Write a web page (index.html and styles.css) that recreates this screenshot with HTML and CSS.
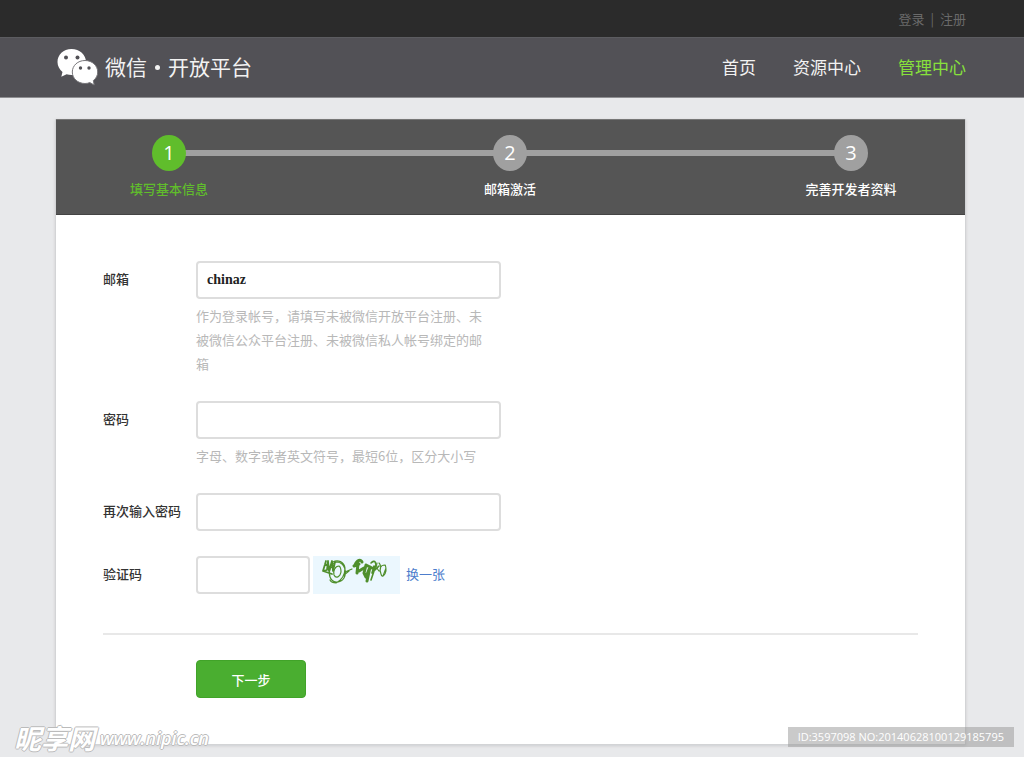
FILE: index.html
```html
<!DOCTYPE html>
<html lang="zh-CN">
<head>
<meta charset="utf-8">
<title>微信·开放平台</title>
<meta name="viewport" content="width=device-width, initial-scale=1">
<link rel="stylesheet" href="styles.css">
</head>
<body>
<div class="topbar">
  <div class="topbar-links"><a href="#">登录</a><span class="divider">|</span><a href="#">注册</a></div>
</div>
<header class="header">
  <a class="brand" href="#">
    <svg class="brand-icon" viewBox="0 0 42 38" aria-hidden="true">
      <path fill="#fff" d="M15.500 1C7.300 1 1.500 6.800 1.500 14c0 4.100 2 7.600 5 9.900L5.300 28.800l5.300-2.600c1.600.5 3.200.8 4.900.8C23.700 27 30 21.200 30 14S23.700 1 15.500 1z"/>
      <circle cx="10" cy="9.500" r="2" fill="#525156"/>
      <circle cx="21.500" cy="9.500" r="2" fill="#525156"/>
      <path fill="#fff" stroke="#77767a" stroke-width="1" d="M29 12.500c-7.200 0-12.700 5.100-12.700 11.500S21.800 35.500 29 35.500c1.700 0 3.300-.3 4.800-.9l4.400 2.400-.9-4.400c2.800-2.100 4.400-5.100 4.400-8.600 0-6.400-5.500-11.500-12.700-11.500z"/>
      <circle cx="24.500" cy="20" r="1.700" fill="#525156"/>
      <circle cx="33" cy="20" r="1.700" fill="#525156"/>
    </svg>
    <span>微信</span><span class="brand-dot"></span><span>开放平台</span>
  </a>
  <nav class="nav">
    <a href="#">首页</a>
    <a href="#">资源中心</a>
    <a class="active" href="#">管理中心</a>
  </nav>
</header>

<main class="card">
  <ol class="steps">
    <li class="step current"><span class="step-num">1</span><span>填写基本信息</span></li>
    <li class="step"><span class="step-num">2</span><span>邮箱激活</span></li>
    <li class="step"><span class="step-num">3</span><span>完善开发者资料</span></li>
  </ol>
  <form class="form">
    <div class="row">
      <label for="email">邮箱</label>
      <div class="field">
        <input class="email" id="email" type="text" value="chinaz">
        <p class="hint">作为登录帐号，请填写未被微信开放平台注册、未被微信公众平台注册、未被微信私人帐号绑定的邮箱</p>
      </div>
    </div>
    <div class="row">
      <label for="password">密码</label>
      <div class="field">
        <input id="password" type="password">
        <p class="hint">字母、数字或者英文符号，最短6位，区分大小写</p>
      </div>
    </div>
    <div class="row">
      <label for="confirm">再次输入密码</label>
      <div class="field"><input id="confirm" type="password"></div>
    </div>
    <div class="row">
      <label for="code">验证码</label>
      <div class="captcha">
        <input id="code" type="text">
        <svg class="captcha-image" viewBox="0 0 87 38" role="img" aria-label="验证码图片">
          <rect width="87" height="38" fill="#ebf7fe"/>
          <g fill="none" stroke="#4f8f2c" stroke-linecap="round" stroke-linejoin="round">
            <path stroke-width="1.800" d="M13 5l-3 10 4-1 1-9 1 10 3-10 1 10 2-9M10 15l9 3M12 8l8 4"/>
            <path stroke-width="1.200" d="M24 6c-6 1-9 9-7 15 2 6 10 7 14 1 3-6 1-15-7-16zM26 10c-4 0-6 5-5 9 2 4 6 2 7-3 0-3 0-5-2-6zM20 6c5-3 11 0 12 6 0 6-3 12-9 15-3 0-5-1-6-3M32 16l7-3M31 19l5-4"/>
            <path stroke-width="3" d="M42 9c2-5 6-6 7-3M41 10l5-2M45 8l-1 9M46 15l5-3"/>
            <path stroke-width="3" d="M53 9l-2 8 2 4 4-10-3 14M53 9l6 3"/>
            <path stroke-width="1.600" d="M58 7c4-4 6 0 4 5l-4 12M61 10l-2 7M62 14l4-4"/>
            <path stroke-width="1.100" d="M64 7c-1 3 0 6 2 8M66 7c2 2 2 5 1 8M72 9c-5 0-6 4-4 9 1 4 4 2 5-3 0-3 0-5-1-6zM70 20l3-8"/>
          </g>
        </svg>
        <a class="refresh" href="#">换一张</a>
      </div>
    </div>
    <div class="actions"><button class="submit" type="submit">下一步</button></div>
  </form>
</main>

<div class="watermark">
  <span class="watermark-name">昵享网</span><span class="watermark-url">www.nipic.cn</span>
</div>
<div class="image-id">ID:3597098 NO:20140628100129185795</div>
</body>
</html>
```
FILE: styles.css
```css
* {
  box-sizing: border-box;
}

body {
  margin: 0;
  min-height: 100vh;
  position: relative;
  padding-bottom: 12px;
  background: #e8e9eb;
  color: #333;
  font: 13px/24px "Noto Sans CJK SC", sans-serif;
}

a {
  color: inherit;
  text-decoration: none;
}

.topbar {
  height: 37px;
  padding: 0 58px 0 55px;
  background: #2b2b2b;
  color: #6a6a6a;
}

.topbar-links {
  display: flex;
  justify-content: flex-end;
  gap: 6px;
  line-height: 37px;
}

.header {
  display: flex;
  justify-content: space-between;
  align-items: center;
  height: 61px;
  padding: 0 58px 2px 56px;
  border-top: 1px solid #5c5c60;
  border-bottom: 1px solid #8e8e91;
  background: #525156;
  color: #f2f2f2;
}

.brand {
  display: flex;
  align-items: center;
  font-size: 21px;
  line-height: 34px;
  padding-bottom: 2px;
  white-space: nowrap;
}

.brand-icon {
  width: 42px;
  height: 38px;
  margin: 2px 7px 0 0;
}

.brand-dot {
  width: 5px;
  height: 5px;
  margin: 3px 8px 0;
  border-radius: 50%;
  background: #f2f2f2;
}

.nav {
  display: flex;
  gap: 37px;
  font-size: 17px;
}

.nav .active {
  color: #87e03c;
}

.card {
  margin: 21px 58px 0 55px;
  border: 1px solid #d3d4d6;
  border-top: 0;
  box-shadow: 0 1px 3px #cccdd0;
  background: #fff;
}

.steps {
  position: relative;
  display: flex;
  justify-content: space-between;
  height: 96px;
  margin: 0;
  padding: 15px 67px 0 66px;
  border-top: 1px solid #777;
  border-bottom: 1px solid #444;
  background: #555;
  color: #fff;
  list-style: none;
}

.steps::before {
  content: "";
  position: absolute;
  top: 30px;
  left: 114px;
  right: 114px;
  height: 6px;
  background: #a0a0a0;
}

.step {
  position: relative;
  display: flex;
  flex-direction: column;
  align-items: center;
  gap: 6px;
  width: 94px;
  font-weight: 500;
  white-space: nowrap;
}

.step-num {
  width: 34px;
  height: 36px;
  border-radius: 50%;
  background: #a0a0a0;
  font: 20px/36px "Open Sans", sans-serif;
  text-align: center;
}

.current {
  color: #60bd2c;
}

.current .step-num {
  background: #60bd2c;
  color: #fff;
}

.form {
  padding: 46px 47px;
}

.row {
  display: grid;
  grid-template-columns: 93px minmax(0, 1fr);
  margin-bottom: 25px;
}

.row label {
  line-height: 36px;
  font-weight: 500;
}

.field {
  max-width: 305px;
}

input {
  display: block;
  width: 100%;
  height: 38px;
  padding: 0 9px;
  border: 2px solid #ddd;
  border-radius: 4px;
  background: #fff;
  color: #222;
  font: 13px "Noto Sans CJK SC", sans-serif;
}

.email {
  font: bold 14px "Liberation Serif", serif;
}

.hint {
  margin: 5px 10px 0 0;
  color: #b8b8b8;
}

.captcha {
  display: flex;
  align-items: center;
}

.captcha input {
  width: 114px;
}

.captcha-image {
  width: 87px;
  height: 38px;
  margin: 0 6px 0 3px;
}

.refresh {
  padding-bottom: 2px;
  color: #4d7dcc;
}

.actions {
  margin-top: 39px;
  padding: 25px 0 0 93px;
  border-top: 2px solid #e8e8e8;
}

.submit {
  display: block;
  width: 110px;
  height: 38px;
  padding: 0;
  border: 1px solid #41a329;
  border-radius: 4px;
  background: #4aae30;
  color: #fff;
  font: 500 13px "Noto Sans CJK SC", sans-serif;
}

.watermark {
  position: absolute;
  left: 14px;
  bottom: 7px;
  display: flex;
  align-items: center;
  gap: 5px;
  color: #fff;
  font-style: italic;
  font-weight: bold;
  text-shadow: 1px 0 #bbb, -1px 0 #bbb, 0 1px #bbb, 0 -1px #bbb;
}

.watermark-name {
  font-size: 27px;
}

.watermark-url {
  font-family: "Open Sans", sans-serif;
  font-size: 18px;
  font-weight: 600;
}

.image-id {
  position: absolute;
  right: 10px;
  bottom: 10px;
  padding: 0 10px;
  background: rgba(150, 150, 150, 0.5);
  color: #fff;
  font: 11px/20px "Open Sans", sans-serif;
}
```
